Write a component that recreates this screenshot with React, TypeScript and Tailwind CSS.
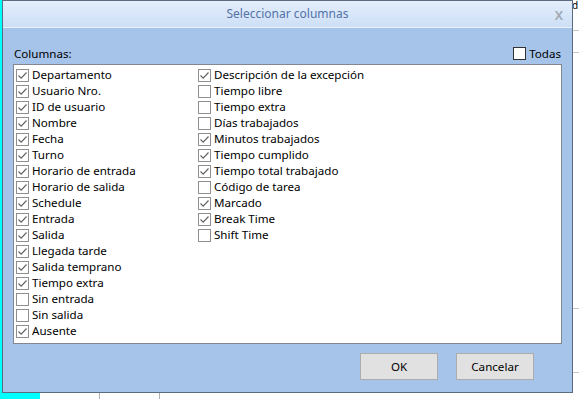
import React, { useState } from 'react';

const leftColumn: [string, boolean][] = [
  ['Departamento', true],
  ['Usuario Nro.', true],
  ['ID de usuario', true],
  ['Nombre', true],
  ['Fecha', true],
  ['Turno', true],
  ['Horario de entrada', true],
  ['Horario de salida', true],
  ['Schedule', true],
  ['Entrada', true],
  ['Salida', true],
  ['Llegada tarde', true],
  ['Salida temprano', true],
  ['Tiempo extra', true],
  ['Sin entrada', false],
  ['Sin salida', false],
  ['Ausente', true],
];

const rightColumn: [string, boolean][] = [
  ['Descripción de la excepción', true],
  ['Tiempo libre', false],
  ['Tiempo extra', false],
  ['Días trabajados', false],
  ['Minutos trabajados', true],
  ['Tiempo cumplido', true],
  ['Tiempo total trabajado', true],
  ['Código de tarea', false],
  ['Marcado', true],
  ['Break Time', true],
  ['Shift Time', false],
];

const CheckItem: React.FC<{ label: string; checked: boolean; onToggle: () => void }> = ({ label, checked, onToggle }) => (
  <div className="flex items-center h-4 cursor-default" onClick={onToggle}>
    <span className="w-[13px] h-[13px] border border-[#8f8f8f] bg-white flex items-center justify-center shrink-0">
      {checked && (
        <svg width="11" height="11" viewBox="0 0 11 11">
          <path d="M1.5 5.5 L4.2 8.2 L9.5 2.5" fill="none" stroke="#666" strokeWidth="1.2" />
        </svg>
      )}
    </span>
    <span className="ml-[3px] text-[11.6px] leading-4 text-black whitespace-nowrap">{label}</span>
  </div>
);

const App: React.FC = () => {
  const [left, setLeft] = useState(leftColumn.map((c) => c[1]));
  const [right, setRight] = useState(rightColumn.map((c) => c[1]));
  const [all, setAll] = useState(false);

  return (
    <div className="relative w-[579px] h-[399px] overflow-hidden bg-white" style={{ fontFamily: '"Noto Sans", "Liberation Sans", sans-serif' }}>
      {/* spreadsheet behind the dialog */}
      <div className="absolute left-0 top-0 w-10 h-full bg-[#00ffff]" />
      <div className="absolute left-[99px] top-[392px] w-px h-2 bg-[#b0b0b0]" />
      <div className="absolute left-[159px] top-[392px] w-px h-2 bg-[#b0b0b0]" />
      <div className="absolute left-[572px] top-[30px] w-2 h-px bg-[#c8c8c8]" />
      <div className="absolute left-[572px] top-[52px] w-2 h-px bg-[#c8c8c8]" />
      <div className="absolute left-[572px] top-[308px] w-2 h-px bg-[#c8c8c8]" />
      <div className="absolute left-[572px] top-[372px] w-2 h-px bg-[#c8c8c8]" />
      <span className="absolute left-[572px] top-0 text-[10px] leading-[10px] text-black">d</span>

      {/* dialog */}
      <div className="absolute left-[2px] top-0 w-[571px] h-[393px] border border-[#5b6b82] flex flex-col bg-[#a6c3e9]">
        <div className="h-[27px] shrink-0 relative flex items-center justify-center bg-gradient-to-b from-[#e4eefb] to-[#cddff6] border-b border-[#e9f2fc]">
          <span className="text-[12px] text-[#5472a8]">Seleccionar columnas</span>
          <span className="absolute right-[9px] top-[5px] text-[13px] font-semibold text-[#a0a8b2]">X</span>
        </div>
        <div className="flex-1 flex flex-col px-[10px] pt-[16px]">
          <div className="h-5 flex items-center justify-between">
            <span className="text-[11.6px] text-black pl-px">Columnas:</span>
            <div className="flex items-center mr-px" onClick={() => setAll(!all)}>
              <span className="w-[13px] h-[13px] border border-[#333] bg-white flex items-center justify-center">
                {all && (
                  <svg width="11" height="11" viewBox="0 0 11 11">
                    <path d="M1.5 5.5 L4.2 8.2 L9.5 2.5" fill="none" stroke="#333" strokeWidth="1.2" />
                  </svg>
                )}
              </span>
              <span className="ml-[3px] text-[11.6px] text-black">Todas</span>
            </div>
          </div>
          <div className="h-[280px] border border-[#828790] bg-white flex pt-[2px] pl-[2px]">
            <div className="w-[182px] flex flex-col">
              {leftColumn.map(([label], i) => (
                <CheckItem key={label} label={label} checked={left[i]} onToggle={() => setLeft(left.map((v, j) => (j === i ? !v : v)))} />
              ))}
            </div>
            <div className="flex flex-col">
              {rightColumn.map(([label], i) => (
                <CheckItem key={label} label={label} checked={right[i]} onToggle={() => setRight(right.map((v, j) => (j === i ? !v : v)))} />
              ))}
            </div>
          </div>
          <div className="flex justify-end gap-[18px] pr-[28px] mt-[9px]">
            <button className="w-[78px] h-[27px] bg-[#e1e1e1] border border-[#adadad] text-[11.6px] text-black">OK</button>
            <button className="w-[78px] h-[27px] bg-[#e1e1e1] border border-[#adadad] text-[11.6px] text-black">Cancelar</button>
          </div>
        </div>
      </div>
    </div>
  );
};

export default App;
